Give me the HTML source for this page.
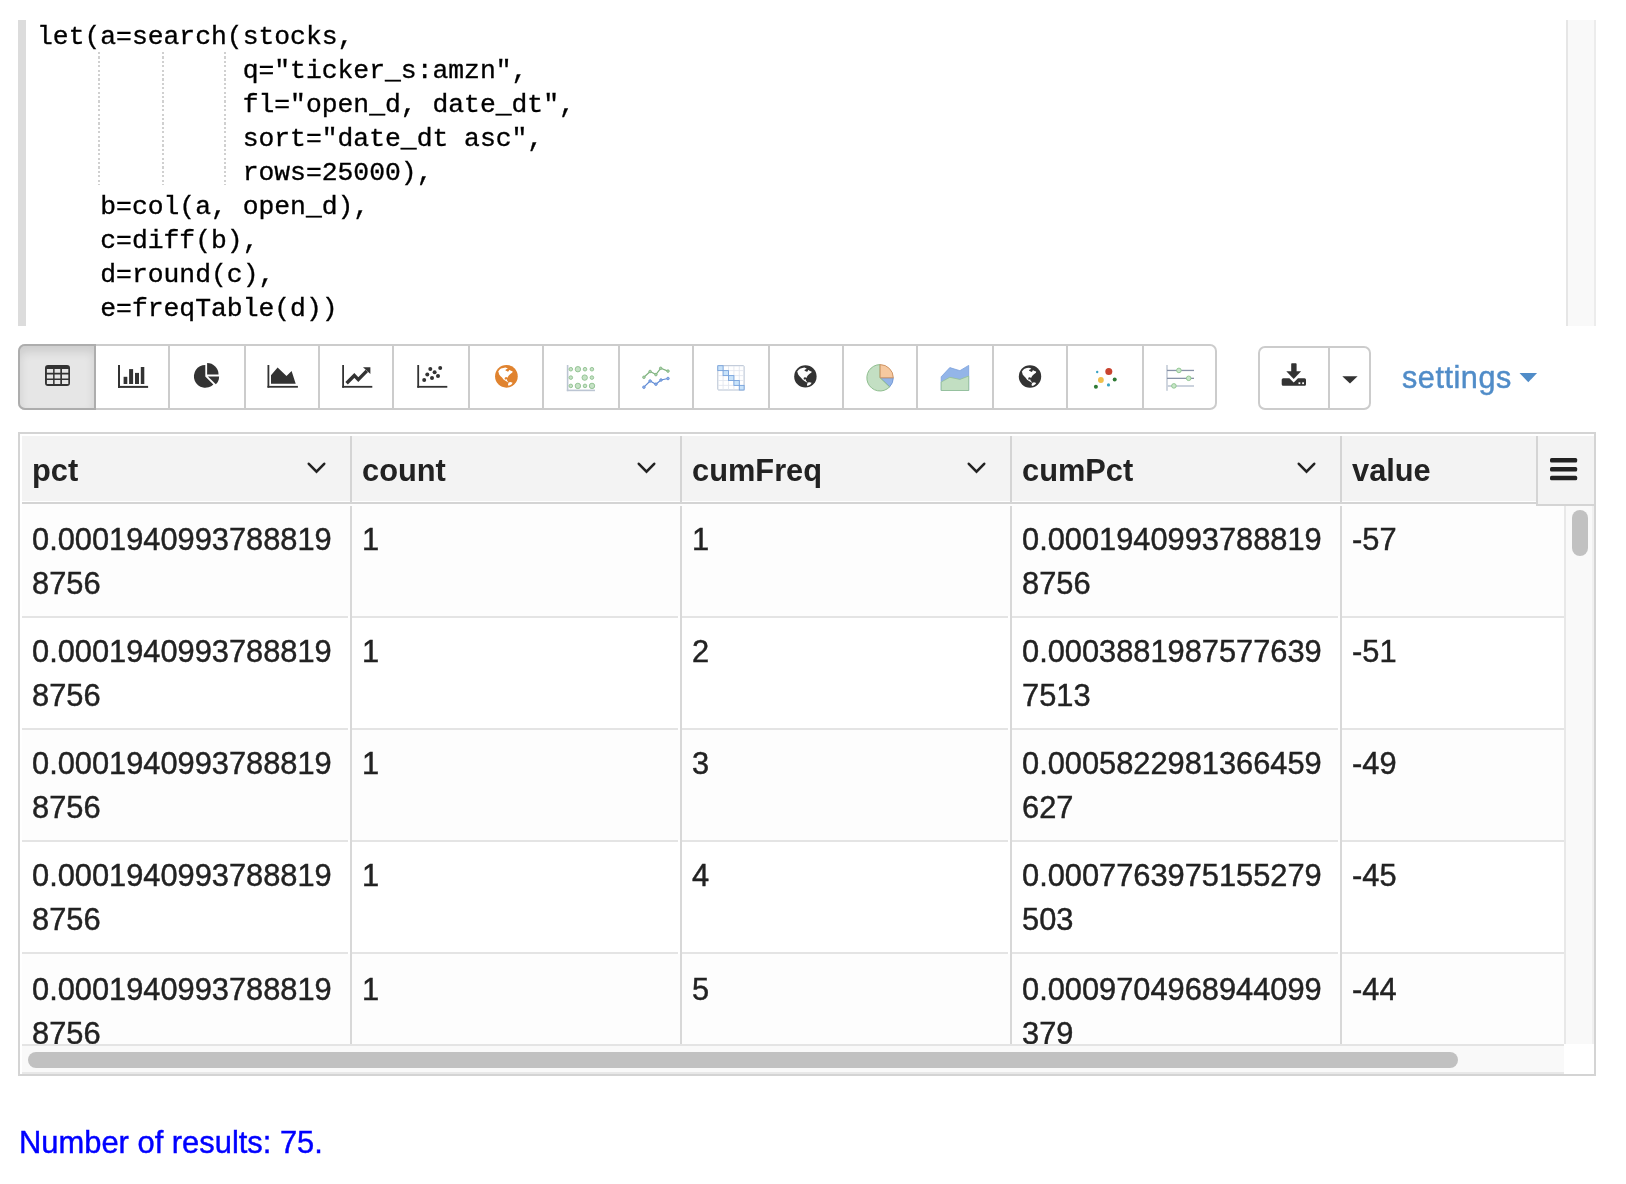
<!DOCTYPE html>
<html><head><meta charset="utf-8">
<style>
html,body{margin:0;padding:0;background:#fff;}
body{width:1626px;height:1184px;overflow:hidden;position:relative;font-family:"Liberation Sans",sans-serif;}
.a{position:absolute;}
#code,.htxt,.ctxt,#results,#settings{will-change:transform;}
.ctxt,#results,#settings{-webkit-text-stroke:0.45px currentColor;}
#code{-webkit-text-stroke:0.35px #000;}
/* editor */
#gutter{left:18px;top:20px;width:8px;height:306px;background:#dcdcdc;}
#vtrack{left:1566px;top:20px;width:26px;height:306px;background:#f9f9f9;border-left:2px solid #e6e6e6;border-right:2px solid #ececec;}
#code{left:36.5px;top:20px;margin:0;font-family:"Liberation Mono",monospace;font-size:26.37px;line-height:34px;color:#000;white-space:pre;}
.guide{width:2px;background:repeating-linear-gradient(to bottom,#d0d0d0 0,#d0d0d0 2.2px,transparent 2.2px,transparent 4.4px);top:51.8px;height:133.4px;}
/* toolbar */
#grp1{left:18px;top:344px;width:1195px;height:62px;border:2px solid #ccc;border-radius:7px;}
#act{left:18px;top:344px;width:74px;height:62px;background:#e6e6e6;box-shadow:inset 0 6px 10px rgba(0,0,0,.11);border:2px solid #adadad;border-radius:7px 0 0 7px;}
.sep{top:0;width:2px;height:62px;background:#ccc;}
#grp2{left:1258px;top:346px;width:109px;height:60px;border:2px solid #ccc;border-radius:7px;}
svg.ic{position:absolute;overflow:visible;}
#settings{left:1402px;top:355.3px;font-size:30.6px;letter-spacing:0.55px;line-height:44px;color:#508cc8;}
/* table */
#grid{left:18px;top:432px;width:1574px;height:640px;border:2px solid #d4d4d4;}
.hdr{background:#f3f3f3;}
.htxt{font-weight:bold;font-size:30.8px;line-height:44px;color:#222;}
.ctxt{font-size:30.8px;line-height:44px;color:#222;}
.vsep{width:2px;background:#d4d4d4;}
.rsep{height:2px;background:#e4e4e4;}
#results{left:19px;top:1121px;font-size:30.9px;line-height:44px;color:#0000ff;}
</style></head><body>

<!-- Editor -->
<div class="a" id="gutter"></div>
<div class="a" id="vtrack"></div>
<div class="a guide" style="left:98px"></div>
<div class="a guide" style="left:162px"></div>
<div class="a guide" style="left:224px"></div>
<pre class="a" id="code">let(a=search(stocks,
             q="ticker_s:amzn",
             fl="open_d, date_dt",
             sort="date_dt asc",
             rows=25000),
    b=col(a, open_d),
    c=diff(b),
    d=round(c),
    e=freqTable(d))</pre>

<!-- Toolbar -->
<div class="a" id="grp1">
  <div class="a sep" style="left:148px"></div>
  <div class="a sep" style="left:224px"></div>
  <div class="a sep" style="left:298px"></div>
  <div class="a sep" style="left:372px"></div>
  <div class="a sep" style="left:448px"></div>
  <div class="a sep" style="left:522px"></div>
  <div class="a sep" style="left:598px"></div>
  <div class="a sep" style="left:672px"></div>
  <div class="a sep" style="left:748px"></div>
  <div class="a sep" style="left:822px"></div>
  <div class="a sep" style="left:896px"></div>
  <div class="a sep" style="left:972px"></div>
  <div class="a sep" style="left:1046px"></div>
  <div class="a sep" style="left:1122px"></div>
</div>
<div class="a" id="act"></div>
<div class="a" id="grp2"><div class="a sep" style="left:68px;height:60px"></div></div>
<svg class="a" style="left:0;top:0" width="1626" height="420" viewBox="0 0 1626 420">

<!-- table -->
<path fill="#333" fill-rule="evenodd" d="M48,365 h19 a3,3 0 0 1 3,3 v15 a3,3 0 0 1 -3,3 h-19 a3,3 0 0 1 -3,-3 v-15 a3,3 0 0 1 3,-3z
M46.9,368.9 h6.2 v3.9 h-6.2z M54.6,368.9 h5.7 v3.9 h-5.7z M62,368.9 h6.3 v3.9 h-6.3z
M46.9,374.6 h6.2 v3.9 h-6.2z M54.6,374.6 h5.7 v3.9 h-5.7z M62,374.6 h6.3 v3.9 h-6.3z
M46.9,380 h6.2 v4 h-6.2z M54.6,380 h5.7 v4 h-5.7z M62,380 h6.3 v4 h-6.3z"/>
<!-- bar chart -->
<g fill="#333">
<rect x="118" y="365" width="2" height="22.9"/><rect x="118" y="385.9" width="30.1" height="2"/>
<rect x="123.6" y="376.8" width="3.7" height="7.2"/><rect x="129.1" y="369.1" width="4" height="14.9"/>
<rect x="135" y="372.9" width="4" height="11.1"/><rect x="140.8" y="367" width="3.5" height="17"/>
</g>
<!-- pie -->
<g fill="#333">
<path d="M205.3,376.4 L205.3,365 A11.4,11.4 0 1 0 213.36,384.46 Z"/>
<path d="M207.1,374.6 L207.1,363.1 A11.5,11.5 0 0 1 218.6,374.6 Z"/>
<path d="M207.9,376.4 L219.1,376.4 A11.2,11.2 0 0 1 215.82,384.32 Z"/>
</g>
<!-- area -->
<g fill="#333">
<rect x="267.5" y="365" width="1.8" height="22.6"/><rect x="267.5" y="385.9" width="30.4" height="1.8"/>
<polygon points="271,383.8 271,375.3 277.6,367.5 286.5,376 291.6,370.9 295.7,383.8"/>
</g>
<!-- line chart -->
<g fill="#333">
<rect x="342.2" y="365" width="1.8" height="22.7"/><rect x="342.2" y="385.9" width="30.1" height="1.8"/>
<polyline points="346.6,383.2 354.3,375.4 358.3,379.6 366.8,370.9" fill="none" stroke="#333" stroke-width="3.5" stroke-linejoin="miter"/>
<polygon points="363,367.2 370.4,367.2 370.4,373.9"/>
</g>
<!-- scatter -->
<g fill="#333">
<rect x="417.3" y="365" width="1.8" height="22.7"/><rect x="417.3" y="385.9" width="30" height="1.8"/>
<circle cx="424.2" cy="380.1" r="2"/><circle cx="427.3" cy="374.4" r="2"/><circle cx="430.3" cy="369.1" r="2"/>
<circle cx="432" cy="378.1" r="2"/><circle cx="434.6" cy="372.2" r="2"/><circle cx="438" cy="375.9" r="2"/><circle cx="440.2" cy="368" r="2"/>
</g>
<!-- orange globe -->
<circle cx="506.4" cy="376.3" r="11.35" fill="#e0832f"/>
<g transform="translate(506.4,376.3)"><path d="M-8.18,-4.81 L-6.91,-6.50 L-5.43,-7.77 L-3.11,-8.40 L-1.00,-8.82 L1.11,-7.98 L1.11,-7.45 L-0.58,-6.71 L-1.00,-5.87 L0.27,-5.23 L1.54,-4.60 L2.38,-5.23 L2.59,-6.08 L3.22,-6.29 L4.49,-5.44 L6.18,-5.02 L5.97,-3.75 L4.91,-3.12 L3.65,-2.06 L2.38,-0.80 L1.54,0.47 L1.11,1.52 L-0.15,0.79 L-1.42,1.10 L-1.84,2.58 L-1.00,3.43 L-0.26,2.69 L0.27,3.00 L0.69,4.27 L1.54,5.33 L2.17,6.38 L0.69,5.54 L-1.00,4.48 L-2.90,3.21 L-4.38,1.31 L-6.07,-0.38 L-7.33,-2.06 L-7.75,-3.75 Z M2.38,6.17 L4.07,5.75 L6.18,6.38 L5.34,7.86 L3.65,8.91 L1.96,9.55 L1.54,8.07 Z" fill="#fff"/></g>
<!-- bubble -->
<g>
<rect x="566.8" y="365" width="1.6" height="26.2" fill="#bcc5d3"/><rect x="566.8" y="389.6" width="28.2" height="1.6" fill="#bcc5d3"/>
<g fill="#c6e2c6" stroke="#8dbf8d" stroke-width="0.9">
<circle cx="570.8" cy="369.2" r="1.8"/><circle cx="577.9" cy="369.2" r="2.7"/><circle cx="585" cy="369.2" r="1.8"/><circle cx="591.9" cy="369.2" r="1.8"/>
<circle cx="570.8" cy="377.6" r="1.8"/><circle cx="584.7" cy="377.6" r="2.7"/><circle cx="591.9" cy="377.6" r="1.8"/>
<circle cx="570.8" cy="385.9" r="1.8"/><circle cx="577.9" cy="385.9" r="2.7"/><circle cx="585" cy="385.9" r="1.8"/><circle cx="592" cy="385.9" r="2.7"/>
</g>
</g>
<!-- multi line -->
<g>
<polyline points="643.9,377.3 650.1,371.5 655.9,374.6 660.7,368.3 668,371.1" fill="none" stroke="#7fb27f" stroke-width="1.2"/>
<g fill="#a8d0a8" stroke="#7fb27f" stroke-width="0.8"><circle cx="643.9" cy="377.3" r="1.3"/><circle cx="650.1" cy="371.5" r="1.3"/><circle cx="655.9" cy="374.6" r="1.3"/><circle cx="660.7" cy="368.3" r="1.3"/><circle cx="668" cy="371.1" r="1.3"/></g>
<polyline points="643.9,387.2 650.1,381 655.9,384.2 661,380 668,378.5" fill="none" stroke="#5f8ad4" stroke-width="1.2"/>
<g fill="#8fb0e6" stroke="#5f8ad4" stroke-width="0.8"><circle cx="643.9" cy="387.2" r="1.3"/><circle cx="650.1" cy="381" r="1.3"/><circle cx="655.9" cy="384.2" r="1.3"/><circle cx="661" cy="380" r="1.3"/><circle cx="668" cy="378.5" r="1.3"/></g>
</g>
<!-- heatmap -->
<g>
<rect x="717.8" y="365.7" width="26.3" height="24.3" fill="#fff" stroke="#b5c1d2" stroke-width="1" rx="0.8"/>
<g stroke="#dfe5ee" stroke-width="0.8">
<line x1="723.1" y1="366" x2="723.1" y2="390"/><line x1="728.5" y1="366" x2="728.5" y2="390"/><line x1="733.9" y1="366" x2="733.9" y2="390"/><line x1="739.3" y1="366" x2="739.3" y2="390"/>
<line x1="718" y1="370.6" x2="744" y2="370.6"/><line x1="718" y1="375.6" x2="744" y2="375.6"/><line x1="718" y1="380.5" x2="744" y2="380.5"/><line x1="718" y1="385.4" x2="744" y2="385.4"/>
</g>
<g fill="#c9e3fa" stroke="#78a3dc" stroke-width="0.9">
<rect x="717.8" y="365.7" width="5.3" height="4.9"/><rect x="723.1" y="370.6" width="5.4" height="5"/><rect x="728.5" y="375.6" width="5.4" height="4.9"/><rect x="733.9" y="380.5" width="5.4" height="4.9"/><rect x="739.3" y="385.4" width="4.8" height="4.6"/>
</g>
</g>
<!-- black globe -->
<circle cx="805.4" cy="376.4" r="11.2" fill="#333"/>
<g transform="translate(805.4,376.4)"><path d="M-8.18,-4.81 L-6.91,-6.50 L-5.43,-7.77 L-3.11,-8.40 L-1.00,-8.82 L1.11,-7.98 L1.11,-7.45 L-0.58,-6.71 L-1.00,-5.87 L0.27,-5.23 L1.54,-4.60 L2.38,-5.23 L2.59,-6.08 L3.22,-6.29 L4.49,-5.44 L6.18,-5.02 L5.97,-3.75 L4.91,-3.12 L3.65,-2.06 L2.38,-0.80 L1.54,0.47 L1.11,1.52 L-0.15,0.79 L-1.42,1.10 L-1.84,2.58 L-1.00,3.43 L-0.26,2.69 L0.27,3.00 L0.69,4.27 L1.54,5.33 L2.17,6.38 L0.69,5.54 L-1.00,4.48 L-2.90,3.21 L-4.38,1.31 L-6.07,-0.38 L-7.33,-2.06 L-7.75,-3.75 Z M2.38,6.17 L4.07,5.75 L6.18,6.38 L5.34,7.86 L3.65,8.91 L1.96,9.55 L1.54,8.07 Z" fill="#fff"/></g>
<!-- colored pie -->
<g stroke-width="0.9">
<path d="M880.1,377.8 L893.3,377.8 A13.2,13.2 0 0 1 889.6,386.9 Z" fill="#93b4e8" stroke="#6f95d2"/>
<path d="M880.1,377.8 L889.6,386.9 A13.2,13.2 0 1 1 880.1,364.6 Z" fill="#c3dfc3" stroke="#86b886"/>
<path d="M880.1,377.8 L880.1,364.6 A13.2,13.2 0 0 1 893.3,377.8 Z" fill="#f6c9a0" stroke="#c98d5c"/>
</g>
<!-- stacked area -->
<g stroke-width="0.8">
<polygon points="941.2,390.5 941.2,376.8 949.8,367.6 959.9,370.7 968.7,365.4 968.7,390.5" fill="#93b5e8" stroke="#7aa0dc"/>
<polygon points="941.2,390.5 941.2,382 949.8,377.3 959.9,379.4 968.7,376.1 968.7,390.5" fill="#c2dfc2" stroke="#93c093"/>
</g>
<!-- globe 3 -->
<circle cx="1030" cy="376.5" r="11.2" fill="#333"/>
<g transform="translate(1030,376.5)"><path d="M-8.18,-4.81 L-6.91,-6.50 L-5.43,-7.77 L-3.11,-8.40 L-1.00,-8.82 L1.11,-7.98 L1.11,-7.45 L-0.58,-6.71 L-1.00,-5.87 L0.27,-5.23 L1.54,-4.60 L2.38,-5.23 L2.59,-6.08 L3.22,-6.29 L4.49,-5.44 L6.18,-5.02 L5.97,-3.75 L4.91,-3.12 L3.65,-2.06 L2.38,-0.80 L1.54,0.47 L1.11,1.52 L-0.15,0.79 L-1.42,1.10 L-1.84,2.58 L-1.00,3.43 L-0.26,2.69 L0.27,3.00 L0.69,4.27 L1.54,5.33 L2.17,6.38 L0.69,5.54 L-1.00,4.48 L-2.90,3.21 L-4.38,1.31 L-6.07,-0.38 L-7.33,-2.06 L-7.75,-3.75 Z M2.38,6.17 L4.07,5.75 L6.18,6.38 L5.34,7.86 L3.65,8.91 L1.96,9.55 L1.54,8.07 Z" fill="#fff"/></g>
<!-- dots -->
<circle cx="1108.8" cy="371.4" r="3.5" fill="#c9432f"/>
<circle cx="1097.2" cy="372" r="1.2" fill="#3aa3c4"/>
<circle cx="1100.9" cy="380" r="2.9" fill="#f0bf4c"/>
<circle cx="1114.7" cy="379.4" r="2" fill="#2f7a35"/>
<circle cx="1108.5" cy="384.9" r="1.6" fill="#3aa3c4"/>
<circle cx="1095.9" cy="386.8" r="2" fill="#2f7a35"/>
<!-- parallel -->
<g>
<rect x="1166.2" y="365" width="1.6" height="25.8" fill="#c5cdd8"/>
<rect x="1167" y="369.8" width="27" height="1.3" fill="#8893a8"/>
<rect x="1167" y="377.7" width="27" height="1.3" fill="#8893a8"/>
<rect x="1167" y="385" width="27" height="2" fill="#cbd2dd"/>
<g fill="#c8e6c8" stroke="#8cc48c" stroke-width="0.9">
<circle cx="1178.9" cy="370.4" r="2.3"/><circle cx="1188.7" cy="378.3" r="2.3"/><circle cx="1173.9" cy="385.9" r="2.3"/>
</g>
</g>
<!-- download -->
<g fill="#333">
<rect x="1291.2" y="363.3" width="5.4" height="9" rx="0.8"/>
<polygon points="1286.3,371.3 1301.1,371.3 1293.7,378.9"/>
<path d="M1283.2,378.2 h6.2 l4.3,4.3 l4.3,-4.3 h6.5 a1.5,1.5 0 0 1 1.5,1.5 v4.6 a1.5,1.5 0 0 1 -1.5,1.5 h-21.3 a1.5,1.5 0 0 1 -1.5,-1.5 v-4.6 a1.5,1.5 0 0 1 1.5,-1.5z"/>
<rect x="1298.5" y="382.3" width="1.8" height="1.8" fill="#fff"/><rect x="1302.2" y="382.3" width="1.8" height="1.8" fill="#fff"/>
<polygon points="1342.3,376.2 1357.6,376.2 1350,383.6"/>
</g>
<!-- settings caret -->
<polygon points="1519.5,373 1537.1,373 1528.3,382.2" fill="#508cc8"/>
</svg>

<div class="a" id="settings">settings</div>

<!-- Grid -->
<div class="a" id="grid"></div>
<div class="a" style="left:22px;top:504px;width:1542px;height:112px;background:#fdfdfd"></div>
<div class="a" style="left:22px;top:618px;width:1542px;height:110px;background:#fff"></div>
<div class="a" style="left:22px;top:730px;width:1542px;height:110px;background:#fdfdfd"></div>
<div class="a" style="left:22px;top:842px;width:1542px;height:110px;background:#fff"></div>
<div class="a" style="left:22px;top:954px;width:1542px;height:90px;background:#fdfdfd"></div>
<div class="a rsep" style="left:22px;top:616px;width:1542px"></div>
<div class="a rsep" style="left:22px;top:728px;width:1542px"></div>
<div class="a rsep" style="left:22px;top:840px;width:1542px"></div>
<div class="a rsep" style="left:22px;top:952px;width:1542px"></div>
<div class="a" style="left:348px;top:616px;width:2px;height:2px;background:#fff"></div>
<div class="a" style="left:678px;top:616px;width:2px;height:2px;background:#fff"></div>
<div class="a" style="left:1008px;top:616px;width:2px;height:2px;background:#fff"></div>
<div class="a" style="left:1338px;top:616px;width:2px;height:2px;background:#fff"></div>
<div class="a" style="left:348px;top:728px;width:2px;height:2px;background:#fff"></div>
<div class="a" style="left:678px;top:728px;width:2px;height:2px;background:#fff"></div>
<div class="a" style="left:1008px;top:728px;width:2px;height:2px;background:#fff"></div>
<div class="a" style="left:1338px;top:728px;width:2px;height:2px;background:#fff"></div>
<div class="a" style="left:348px;top:840px;width:2px;height:2px;background:#fff"></div>
<div class="a" style="left:678px;top:840px;width:2px;height:2px;background:#fff"></div>
<div class="a" style="left:1008px;top:840px;width:2px;height:2px;background:#fff"></div>
<div class="a" style="left:1338px;top:840px;width:2px;height:2px;background:#fff"></div>
<div class="a" style="left:348px;top:952px;width:2px;height:2px;background:#fff"></div>
<div class="a" style="left:678px;top:952px;width:2px;height:2px;background:#fff"></div>
<div class="a" style="left:1008px;top:952px;width:2px;height:2px;background:#fff"></div>
<div class="a" style="left:1338px;top:952px;width:2px;height:2px;background:#fff"></div>
<div class="a vsep" style="left:350px;top:506px;height:538px;background:#d8d8d8"></div>
<div class="a vsep" style="left:680px;top:506px;height:538px;background:#d8d8d8"></div>
<div class="a vsep" style="left:1010px;top:506px;height:538px;background:#d8d8d8"></div>
<div class="a vsep" style="left:1340px;top:506px;height:538px;background:#d8d8d8"></div>
<div class="a hdr" style="left:22px;top:436px;width:1514px;height:65px"></div>
<div class="a" style="left:22px;top:501px;width:1514px;height:1px;background:#fff"></div>
<div class="a hdr" style="left:1538px;top:436px;width:56px;height:68px"></div>
<div class="a" style="left:22px;top:502px;width:1514px;height:2px;background:#d4d4d4"></div>
<div class="a" style="left:1536px;top:504px;width:58px;height:2px;background:#d4d4d4"></div>
<div class="a vsep" style="left:1536px;top:436px;height:70px"></div>
<div class="a vsep" style="left:350px;top:436px;height:66px"></div>
<div class="a vsep" style="left:680px;top:436px;height:66px"></div>
<div class="a vsep" style="left:1010px;top:436px;height:66px"></div>
<div class="a vsep" style="left:1340px;top:436px;height:66px"></div>
<div class="a htxt" style="left:31.5px;top:448.6px">pct</div>
<div class="a htxt" style="left:361.5px;top:448.6px">count</div>
<div class="a htxt" style="left:691.5px;top:448.6px">cumFreq</div>
<div class="a htxt" style="left:1021.5px;top:448.6px">cumPct</div>
<div class="a htxt" style="left:1351.5px;top:448.6px">value</div>
<svg class="a" style="left:0;top:0" width="1626" height="520"><polyline points="308.8,463.8 316.5,471.6 324.2,463.8" fill="none" stroke="#222" stroke-width="2.6" stroke-linecap="round"/><polyline points="638.8,463.8 646.5,471.6 654.2,463.8" fill="none" stroke="#222" stroke-width="2.6" stroke-linecap="round"/><polyline points="968.8,463.8 976.5,471.6 984.2,463.8" fill="none" stroke="#222" stroke-width="2.6" stroke-linecap="round"/><polyline points="1298.8,463.8 1306.5,471.6 1314.2,463.8" fill="none" stroke="#222" stroke-width="2.6" stroke-linecap="round"/><g fill="#222"><rect x="1550" y="458" width="27.2" height="4.5" rx="1.6"/><rect x="1550" y="467" width="27.2" height="4.5" rx="1.6"/><rect x="1550" y="475.8" width="27.2" height="4.5" rx="1.6"/></g></svg>
<div class="a ctxt" style="left:31.5px;top:517.9px">0.0001940993788819<br>8756</div>
<div class="a ctxt" style="left:361.5px;top:517.9px">1</div>
<div class="a ctxt" style="left:691.5px;top:517.9px">1</div>
<div class="a ctxt" style="left:1021.5px;top:517.9px">0.0001940993788819<br>8756</div>
<div class="a ctxt" style="left:1351.5px;top:517.9px">-57</div>
<div class="a ctxt" style="left:31.5px;top:629.9px">0.0001940993788819<br>8756</div>
<div class="a ctxt" style="left:361.5px;top:629.9px">1</div>
<div class="a ctxt" style="left:691.5px;top:629.9px">2</div>
<div class="a ctxt" style="left:1021.5px;top:629.9px">0.0003881987577639<br>7513</div>
<div class="a ctxt" style="left:1351.5px;top:629.9px">-51</div>
<div class="a ctxt" style="left:31.5px;top:741.9px">0.0001940993788819<br>8756</div>
<div class="a ctxt" style="left:361.5px;top:741.9px">1</div>
<div class="a ctxt" style="left:691.5px;top:741.9px">3</div>
<div class="a ctxt" style="left:1021.5px;top:741.9px">0.0005822981366459<br>627</div>
<div class="a ctxt" style="left:1351.5px;top:741.9px">-49</div>
<div class="a ctxt" style="left:31.5px;top:853.9px">0.0001940993788819<br>8756</div>
<div class="a ctxt" style="left:361.5px;top:853.9px">1</div>
<div class="a ctxt" style="left:691.5px;top:853.9px">4</div>
<div class="a ctxt" style="left:1021.5px;top:853.9px">0.0007763975155279<br>503</div>
<div class="a ctxt" style="left:1351.5px;top:853.9px">-45</div>
<div class="a ctxt" style="left:31.5px;top:967.9px">0.0001940993788819<br>8756</div>
<div class="a ctxt" style="left:361.5px;top:967.9px">1</div>
<div class="a ctxt" style="left:691.5px;top:967.9px">5</div>
<div class="a ctxt" style="left:1021.5px;top:967.9px">0.0009704968944099<br>379</div>
<div class="a ctxt" style="left:1351.5px;top:967.9px">-44</div>
<div class="a" style="left:22px;top:1044px;width:1542px;height:2px;background:#e4e4e4"></div>
<div class="a" style="left:22px;top:1046px;width:1542px;height:26px;background:#f9f9f9"></div>
<div class="a" style="left:22px;top:1072px;width:1542px;height:2px;background:#e8e8e8"></div>
<div class="a" style="left:28px;top:1052px;width:1430px;height:16px;border-radius:8px;background:#c1c1c1"></div>
<div class="a" style="left:1564px;top:506px;width:30px;height:538px;background:#f9f9f9"></div>
<div class="a" style="left:1564px;top:506px;width:2px;height:538px;background:#e8e8e8"></div>
<div class="a" style="left:1592px;top:506px;width:2px;height:538px;background:#f0f0f0"></div>
<div class="a" style="left:1572px;top:510px;width:16px;height:46px;border-radius:8px;background:#c1c1c1"></div>
<div class="a" id="results">Number of results: 75.</div>
</body></html>
